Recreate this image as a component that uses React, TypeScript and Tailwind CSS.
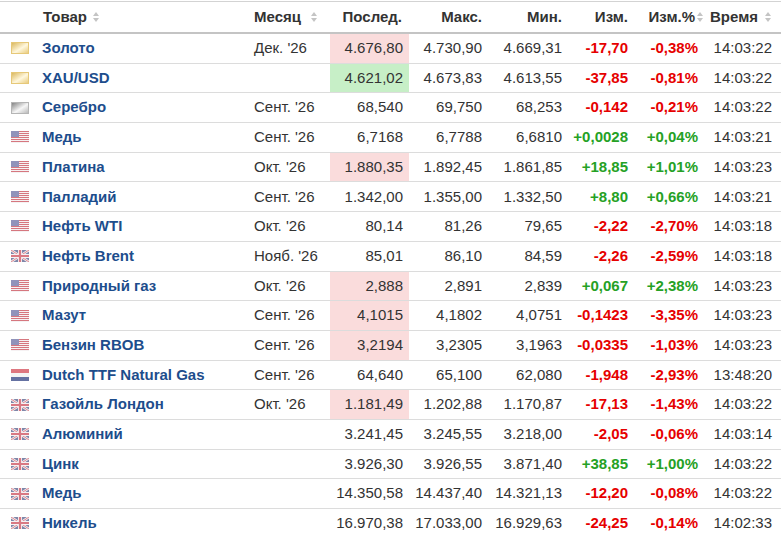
import React from 'react';

type Flag = 'gold' | 'silver' | 'us' | 'uk' | 'nl';
type Hl = 'up' | 'down' | undefined;

interface Row {
  flag: Flag;
  name: string;
  month: string;
  last: string;
  hl?: Hl;
  high: string;
  low: string;
  chg: string;
  pct: string;
  time: string;
}

const rows: Row[] = [
  { flag: 'gold', name: 'Золото', month: "Дек. '26", last: '4.676,80', hl: 'down', high: '4.730,90', low: '4.669,31', chg: '-17,70', pct: '-0,38%', time: '14:03:22' },
  { flag: 'gold', name: 'XAU/USD', month: '', last: '4.621,02', hl: 'up', high: '4.673,83', low: '4.613,55', chg: '-37,85', pct: '-0,81%', time: '14:03:22' },
  { flag: 'silver', name: 'Серебро', month: "Сент. '26", last: '68,540', high: '69,750', low: '68,253', chg: '-0,142', pct: '-0,21%', time: '14:03:22' },
  { flag: 'us', name: 'Медь', month: "Сент. '26", last: '6,7168', high: '6,7788', low: '6,6810', chg: '+0,0028', pct: '+0,04%', time: '14:03:21' },
  { flag: 'us', name: 'Платина', month: "Окт. '26", last: '1.880,35', hl: 'down', high: '1.892,45', low: '1.861,85', chg: '+18,85', pct: '+1,01%', time: '14:03:23' },
  { flag: 'us', name: 'Палладий', month: "Сент. '26", last: '1.342,00', high: '1.355,00', low: '1.332,50', chg: '+8,80', pct: '+0,66%', time: '14:03:21' },
  { flag: 'us', name: 'Нефть WTI', month: "Окт. '26", last: '80,14', high: '81,26', low: '79,65', chg: '-2,22', pct: '-2,70%', time: '14:03:18' },
  { flag: 'uk', name: 'Нефть Brent', month: "Нояб. '26", last: '85,01', high: '86,10', low: '84,59', chg: '-2,26', pct: '-2,59%', time: '14:03:18' },
  { flag: 'us', name: 'Природный газ', month: "Окт. '26", last: '2,888', hl: 'down', high: '2,891', low: '2,839', chg: '+0,067', pct: '+2,38%', time: '14:03:23' },
  { flag: 'us', name: 'Мазут', month: "Сент. '26", last: '4,1015', hl: 'down', high: '4,1802', low: '4,0751', chg: '-0,1423', pct: '-3,35%', time: '14:03:23' },
  { flag: 'us', name: 'Бензин RBOB', month: "Сент. '26", last: '3,2194', hl: 'down', high: '3,2305', low: '3,1963', chg: '-0,0335', pct: '-1,03%', time: '14:03:23' },
  { flag: 'nl', name: 'Dutch TTF Natural Gas', month: "Сент. '26", last: '64,640', high: '65,100', low: '62,080', chg: '-1,948', pct: '-2,93%', time: '13:48:20' },
  { flag: 'uk', name: 'Газойль Лондон', month: "Окт. '26", last: '1.181,49', hl: 'down', high: '1.202,88', low: '1.170,87', chg: '-17,13', pct: '-1,43%', time: '14:03:22' },
  { flag: 'uk', name: 'Алюминий', month: '', last: '3.241,45', high: '3.245,55', low: '3.218,00', chg: '-2,05', pct: '-0,06%', time: '14:03:14' },
  { flag: 'uk', name: 'Цинк', month: '', last: '3.926,30', high: '3.926,55', low: '3.871,40', chg: '+38,85', pct: '+1,00%', time: '14:03:22' },
  { flag: 'uk', name: 'Медь', month: '', last: '14.350,58', high: '14.437,40', low: '14.321,13', chg: '-12,20', pct: '-0,08%', time: '14:03:22' },
  { flag: 'uk', name: 'Никель', month: '', last: '16.970,38', high: '17.033,00', low: '16.929,63', chg: '-24,25', pct: '-0,14%', time: '14:02:33' },
];

function FlagIcon({ kind }: { kind: Flag }) {
  if (kind === 'gold' || kind === 'silver') {
    const c = kind === 'gold' ? ['#d8b458', '#fff7dc', '#e6c878'] : ['#7c7c7c', '#f7f7f7', '#b5b5b5'];
    const id = `g-${kind}`;
    return (
      <svg width="18" height="12" viewBox="0 0 18 12">
        <defs>
          <linearGradient id={id} x1="0" y1="0" x2="1" y2="1">
            <stop offset="0" stopColor={c[0]} />
            <stop offset="0.55" stopColor={c[1]} />
            <stop offset="1" stopColor={c[2]} />
          </linearGradient>
        </defs>
        <rect x="0.5" y="0.5" width="17" height="11" fill={`url(#${id})`} stroke={c[2]} strokeWidth="1" />
      </svg>
    );
  }
  if (kind === 'us') {
    return (
      <svg width="18" height="12" viewBox="0 0 18 12" opacity="0.75">
        {[0, 1, 2, 3, 4, 5].map((i) => (
          <rect key={i} x="0" y={i * 2} width="18" height="1" fill="#c94a55" />
        ))}
        {[0, 1, 2, 3, 4, 5].map((i) => (
          <rect key={`w${i}`} x="0" y={i * 2 + 1} width="18" height="1" fill="#f3eef0" />
        ))}
        <rect x="0" y="0" width="8" height="6" fill="#6b6fa3" />
      </svg>
    );
  }
  if (kind === 'uk') {
    return (
      <svg width="18" height="12" viewBox="0 0 18 12" opacity="0.7">
        <rect width="18" height="12" fill="#4a5585" />
        <path d="M0 0L18 12M18 0L0 12" stroke="#f2eef0" strokeWidth="2.4" />
        <path d="M0 0L18 12M18 0L0 12" stroke="#c9414f" strokeWidth="0.9" />
        <path d="M9 0V12M0 6H18" stroke="#f2eef0" strokeWidth="4" />
        <path d="M9 0V12M0 6H18" stroke="#c9414f" strokeWidth="2.2" />
      </svg>
    );
  }
  return (
    <svg width="18" height="12" viewBox="0 0 18 12" opacity="0.85">
      <rect y="0" width="18" height="4" fill="#d9606b" />
      <rect y="4" width="18" height="4" fill="#f4f4f4" />
      <rect y="8" width="18" height="4" fill="#4b5a92" />
    </svg>
  );
}

function SortIcon() {
  return (
    <svg width="6" height="10" viewBox="0 0 6 10" className="ml-[6px] shrink-0">
      <path d="M3 0L6 4H0Z" fill="#c4c4c4" />
      <path d="M3 10L6 6H0Z" fill="#c4c4c4" />
    </svg>
  );
}

const cols = 'grid grid-cols-[38px_210px_82px_79px_79px_80px_66px_70px_74px]';

export default function App() {
  return (
    <div className="w-[781px] h-[536px] overflow-hidden bg-white text-[15px] text-[#333] font-['Liberation_Sans',Arial,sans-serif]">
      <div className={`${cols} mt-px h-[33px] border-t border-b-2 border-t-[#d3d3d3] border-b-[#c4c4c4] font-bold items-center`}>
        <div />
        <div className="flex items-center pl-[5px]">
          Товар
          <SortIcon />
        </div>
        <div className="flex items-center pl-[6px]">
          Месяц
          <span className="ml-[4px] flex">
            <SortIcon />
          </span>
        </div>
        <div className="text-right pr-[7px]">Послед.</div>
        <div className="text-right pr-[6px]">Макс.</div>
        <div className="text-right pr-[6px]">Мин.</div>
        <div className="text-right pr-[6px]">Изм.</div>
        <div className="flex items-center justify-end pr-[1px]">
          Изм.%
          <span className="ml-[-4px] flex">
            <SortIcon />
          </span>
        </div>
        <div className="flex items-center justify-end pr-[7px]">
          Время
          <span className="ml-[1px] flex">
            <SortIcon />
          </span>
        </div>
      </div>
      {rows.map((r, i) => {
        const up = r.chg.startsWith('+');
        const chgCls = up ? 'text-[#25a125]' : 'text-[#e60000]';
        const bg = r.hl === 'down' ? 'bg-[#fadcdc]' : r.hl === 'up' ? 'bg-[#c7efc7]' : '';
        return (
          <div key={i} className={`${cols} h-[29.7px] border-b border-[#dcdcdc] items-stretch`}>
            <div className="flex items-center pl-[11px]">
              <FlagIcon kind={r.flag} />
            </div>
            <div className="flex items-center pl-[4px] font-bold text-[#1d4d8c] whitespace-nowrap">{r.name}</div>
            <div className="flex items-center pl-[6px] whitespace-nowrap">{r.month}</div>
            <div className={`flex items-center justify-end pr-[6px] ${bg}`}>{r.last}</div>
            <div className="flex items-center justify-end pr-[6px]">{r.high}</div>
            <div className="flex items-center justify-end pr-[6px]">{r.low}</div>
            <div className={`flex items-center justify-end pr-[6px] font-bold ${chgCls}`}>{r.chg}</div>
            <div className={`flex items-center justify-end pr-[6px] font-bold ${chgCls}`}>{r.pct}</div>
            <div className="flex items-center justify-end pr-[6px]">{r.time}</div>
          </div>
        );
      })}
    </div>
  );
}
